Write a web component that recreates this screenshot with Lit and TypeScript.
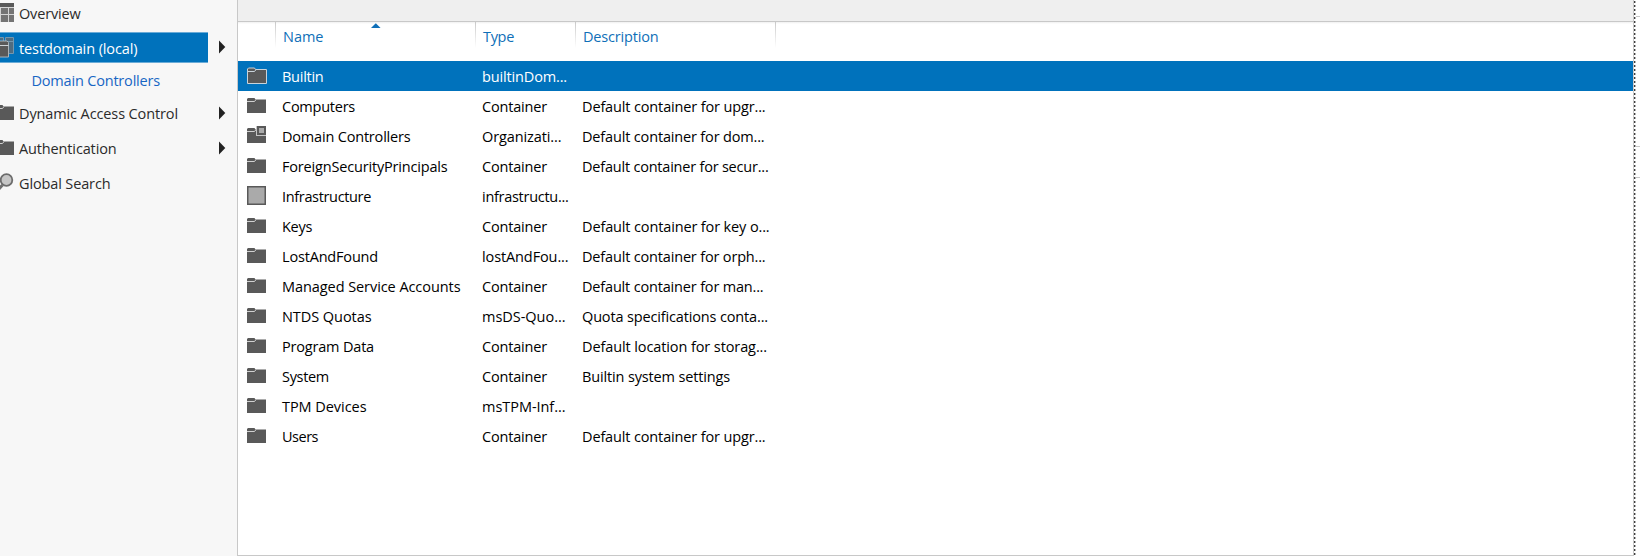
import { LitElement, html, svg, css, nothing } from "lit";
import { customElement, property, state } from "lit/decorators.js";
import { classMap } from "lit/directives/class-map.js";

/** A single-line label tracked so that it spans a given width. */
@customElement("fit-text")
class FitText extends LitElement {
  @property() text = "";
  @property({ type: Number }) span = 0;
  @state() private tracking = 0;

  static styles = css`
    :host { display: inline-block; white-space: pre; }
  `;

  firstUpdated() {
    const label = this.renderRoot.querySelector("span")!;
    const natural = label.getBoundingClientRect().width;
    if (this.span) this.tracking = (this.span - natural) / this.text.length;
  }

  render() {
    return html`<span style="letter-spacing:${this.tracking}px">${this.text}</span>`;
  }
}

const t = (text: string, span: number) =>
  html`<fit-text .text=${text} .span=${span}></fit-text>`;

type Icon = "folder" | "folder-selected" | "unit" | "object" | "grid" | "domain" | "search";

const folder = svg`
  <path fill="#595959" d="M0 3 L1 2 H7.5 L8.5 3.6 H19 V17 H0 Z"/>
  <path fill="none" stroke="#d0d0d0" d="M0 5.5 H7.5 L9 3.6"/>`;

const glyphs: Record<Icon, unknown> = {
  folder,
  "folder-selected": svg`
    <path fill="#595959" stroke="#c9d3da" d="M.5 17.5 V3 L1.5 2 H7.5 L8.5 3.5 H19.5 V17.5 Z"/>
    <path fill="none" stroke="#c9d3da" d="M.5 5.5 H7.5 L9 3.6"/>`,
  unit: svg`${folder}
    <rect x="9" y="0" width="10" height="10" fill="#c4c4c4"/>
    <rect x="10" y="0" width="9" height="9" fill="#595959"/>
    <rect x="12" y="2" width="5" height="5" fill="#aaa"/>`,
  object: svg`<rect x=".75" y=".75" width="17.5" height="17.5" fill="#aaa" stroke="#595959" stroke-width="1.5"/>`,
  grid: svg`
    <rect x="0" y="0" width="19" height="19" fill="#747474"/>
    <rect x="0" y="0" width="19" height="4" fill="#595959"/>
    <path fill="none" stroke="#d5d5d5" d="M0 4.5 H19 M0 11.5 H19 M5.5 4 V19 M13.5 4 V19"/>`,
  domain: svg`
    <path fill="#4f6c80" stroke="#7397ae" d="M10.5 .5 H18.5 V16.5 H10.5 Z M10.5 4.5 H18.5"/>
    <path fill="#4f6c80" stroke="#7397ae" d="M0 .5 H8.5 V4"/>
    <path fill="#595959" stroke="#a9b3ba" d="M0 4 H12 L13.5 5.5 V20 H0 Z"/>
    <path fill="none" stroke="#cdd3d7" d="M0 8.5 H13.5"/>`,
  search: svg`
    <path stroke="#707070" stroke-width="3" d="M7.5 12 L3 17"/>
    <circle cx="11.5" cy="7" r="5.8" fill="#c6c6c6" stroke="#6c6c6c" stroke-width="1.8"/>`,
};

const icon = (name: Icon) => html`<svg class="icon" width="20" height="21" viewBox="0 0 20 21">${glyphs[name]}</svg>`;

const rows: [Icon, string, number, string, number, string, number][] = [
  ["folder-selected", "Builtin", 41.5, "builtinDom...", 85, "", 0],
  ["folder", "Computers", 73, "Container", 65, "Default container for upgr...", 183.5],
  ["unit", "Domain Controllers", 128.5, "Organizati...", 79.5, "Default container for dom...", 182.5],
  ["folder", "ForeignSecurityPrincipals", 165.5, "Container", 65, "Default container for secur...", 186.5],
  ["object", "Infrastructure", 89, "infrastructu...", 86.5, "", 0],
  ["folder", "Keys", 30, "Container", 65, "Default container for key o...", 187.5],
  ["folder", "LostAndFound", 96, "lostAndFou...", 86.5, "Default container for orph...", 183.5],
  ["folder", "Managed Service Accounts", 178.5, "Container", 65, "Default container for man...", 181.5],
  ["folder", "NTDS Quotas", 89.5, "msDS-Quo...", 83.5, "Quota specifications conta...", 186],
  ["folder", "Program Data", 92, "Container", 65, "Default location for storag...", 185],
  ["folder", "System", 47, "Container", 65, "Builtin system settings", 148],
  ["folder", "TPM Devices", 84.5, "msTPM-Inf...", 83.5, "", 0],
  ["folder", "Users", 36, "Container", 65, "Default container for upgr...", 183.5],
];

@customElement("app-root")
class AppRoot extends LitElement {
  static styles = css`
    :host {
      display: grid;
      grid-template-columns: 237px 1397px 1fr;
      width: 1640px;
      height: 556px;
      overflow: hidden;
      background: #f7f7f7;
      font: 14.5px/30px "Open Sans", "Noto Sans", sans-serif;
      color: #000;
    }
    .icon { display: block; flex: none; }

    .nav { display: flex; flex-direction: column; color: #2b2b2b; }
    .item { display: flex; align-items: center; height: 35px; }
    .item .icon { margin-left: -5px; }
    .label { display: flex; align-items: center; gap: 4px; width: 208px; height: 100%; box-sizing: border-box; }
    .first { height: 27px; margin-bottom: 5px; }
    .current { height: 31px; }
    .current .label { background: #0072bc; color: #fff; border: solid #6aabd7; border-width: 1px 0; }
    .current fit-text { padding-top: 3px; }
    .child { height: 34px; line-height: 36px; padding-left: 31.5px; box-sizing: border-box; color: #1766c4; }
    .arrow { display: block; margin: 0 0 1px 11px; }
    .lift .icon { margin-top: -2px; }
    .lift fit-text { margin-top: -2px; }
    .lift .arrow { margin-bottom: 3px; }

    .main {
      display: flex;
      flex-direction: column;
      box-sizing: border-box;
      background: #fff;
      border: solid #c8c8c8;
      border-width: 0 1px 1px 1px;
    }
    .strip { height: 21px; background: #efefef; border-bottom: 1px solid #c8c8c8; }
    .head, .row { display: grid; grid-template-columns: 37px 200px 100px 200px 1fr; }
    .head { height: 39px; line-height: 29px; color: #0f6fb8; background: linear-gradient(#f0f0f0, #fff 2px); }
    .col {
      position: relative;
      height: 26px;
      padding-left: 8px;
      background: linear-gradient(#c9c9c9, #fff) left top / 1px 26px no-repeat;
    }
    .sort { position: absolute; left: 96px; top: 1px; }
    .row { height: 30px; line-height: 32px; }
    .row.selected { background: #0072bc; color: #fff; }
    .cell { padding-left: 7px; height: 30px; white-space: nowrap; overflow: hidden; }
    .mark { padding: 5px 0 0 9px; }

    .gutter { display: grid; grid-template-columns: 2px 1fr; background: #fff; }
    .dots {
      background:
        repeating-linear-gradient(transparent 0 1px, #3c3c3c 1px 3px, transparent 3px 4px) left / 1px 100% no-repeat,
        repeating-linear-gradient(#fff 0 1px, #b4b4b4 1px 3px, #fff 3px 4px) #fff;
    }
    .panes { display: flex; flex-direction: column; }
    .pane { border-bottom: 1px solid #c8c8c8; }
    .pane.a { height: 16px; }
    .pane.b { height: 129px; }
    .pane.c { height: 30px; }
  `;

  private item(name: Icon, label: unknown, arrow: boolean, extra = {}) {
    return html`<div class=${classMap({ item: true, ...extra })}>
      <div class="label">${icon(name)}${label}</div>
      ${arrow
        ? html`<svg class="arrow" width="7" height="14" viewBox="0 0 7 14"><path fill="#222" d="M0 .5 L6.3 7 L0 13.5 Z"/></svg>`
        : nothing}
    </div>`;
  }

  render() {
    return html`
      <nav class="nav">
        ${this.item("grid", t("Overview", 61.5), false, { first: true })}
        ${this.item("domain", t("testdomain (local)", 118.5), true, { current: true })}
        <div class="child">${t("Domain Controllers", 128.5)}</div>
        ${this.item("folder", t("Dynamic Access Control", 159), true, { lift: true })}
        ${this.item("folder", t("Authentication", 97.5), true, { lift: true })}
        ${this.item("search", t("Global Search", 91.5), false, { lift: true })}
      </nav>
      <main class="main">
        <div class="strip"></div>
        <div class="head">
          <div></div>
          <div class="col">${t("Name", 40.5)}
            <svg class="sort" width="10" height="5" viewBox="0 0 10 5"><path fill="#0f6fb8" d="M0 5 L4.8 .2 L9.6 5 Z"/></svg>
          </div>
          <div class="col">${t("Type", 31)}</div>
          <div class="col">${t("Description", 75.5)}</div>
          <div class="col"></div>
        </div>
        ${rows.map(
          ([ic, name, nw, type, tw, desc, dw], i) => html`
            <div class=${classMap({ row: true, selected: i === 0 })}>
              <div class="mark">${icon(ic)}</div>
              <div class="cell">${t(name, nw)}</div>
              <div class="cell">${t(type, tw)}</div>
              <div class="cell">${desc ? t(desc, dw) : nothing}</div>
            </div>`
        )}
      </main>
      <aside class="gutter">
        <div class="dots"></div>
        <div class="panes">
          <div class="pane a"></div>
          <div class="pane b"></div>
          <div class="pane c"></div>
        </div>
      </aside>
    `;
  }
}
